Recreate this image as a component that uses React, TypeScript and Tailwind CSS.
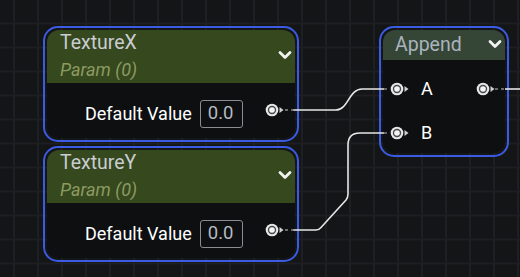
const font = { fontFamily: 'Roboto, "Noto Sans", sans-serif' }

function Chevron() {
  return (
    <svg width="14" height="10" viewBox="0 0 14 10" className="shrink-0">
      <polyline points="2,2.5 7,7.5 12,2.5" fill="none" stroke="#f2f2f2" strokeWidth="2.8" strokeLinecap="round" strokeLinejoin="round" />
    </svg>
  )
}

function ParamNode({ name, top }: { name: string; top: string }) {
  return (
    <div className={`absolute left-[43px] ${top} w-[256px] h-[116px] rounded-[15px] border-2 border-[#3b5be3] p-[2px]`}>
      <div className="h-full rounded-[12px] bg-[#0e0f11] overflow-hidden flex flex-col">
        <div className="h-[53px] bg-[#36481d] flex items-center pl-[13px] pr-[3px]">
          <div className="flex-1 flex flex-col self-start pt-[1px]">
            <span className="text-[19.5px] leading-[24px] text-[#c9cdd3]">{name}</span>
            <span className="mt-[4px] text-[18px] leading-[22px] italic text-[#8d9a62]">Param (0)</span>
          </div>
          <div className="mb-[3px]">
            <Chevron />
          </div>
        </div>
        <div className="flex items-center gap-[8px] pt-[17px] pl-[38px]">
          <span className="text-[18px] leading-[28px] text-white">Default Value</span>
          <div className="h-[28px] w-[43px] border border-[#8b8d91] rounded-[3px] flex items-center pl-[7px] text-[18.5px] text-[#b6bac2]">
            0.0
          </div>
        </div>
      </div>
    </div>
  )
}

function AppendNode() {
  return (
    <div className="absolute left-[379px] top-[26px] w-[130px] h-[131px] rounded-[15px] border-2 border-[#3b5be3] p-[2px]">
      <div className="h-full rounded-[12px] bg-[#0e0f11] overflow-hidden flex flex-col">
        <div className="h-[30px] bg-[#354536] flex items-center justify-between pl-[12px] pr-[3px]">
          <span className="text-[19.5px] leading-[24px] text-[#aab4bd]">Append</span>
          <div className="mb-[2px]">
            <Chevron />
          </div>
        </div>
        <div className="flex flex-col gap-[16px] pt-[15px] pl-[38px] text-[18px] text-white">
          <span className="h-[28px] leading-[28px]">A</span>
          <span className="h-[28px] leading-[28px]">B</span>
        </div>
      </div>
    </div>
  )
}

function Pin({ x, y }: { x: number; y: number }) {
  return (
    <g>
      <circle cx={x} cy={y} r="6.3" fill="#e8e8e8" />
      <circle cx={x} cy={y} r="4.2" fill="#4a4a4a" />
      <circle cx={x} cy={y} r="2.8" fill="#f4f4f4" />
      <polygon points={`${x + 7.5},${y - 3} ${x + 11.5},${y} ${x + 7.5},${y + 3}`} fill="#d0d0d0" />
    </g>
  )
}

export default function App() {
  const vlines = Array.from({ length: 22 }, (_, i) => 14 + i * 24)
  const hlines = Array.from({ length: 12 }, (_, i) => 23.5 + i * 24)
  return (
    <div className="relative w-[520px] h-[277px] overflow-hidden bg-[#141517]" style={font}>
      <svg className="absolute inset-0" width="520" height="277">
        {vlines.map((x) => (
          <rect key={`v${x}`} x={x - 1} y="0" width="2" height="277" fill="#1e1f22" />
        ))}
        {hlines.map((y) => (
          <rect key={`h${y}`} x="0" y={y - 1} width="520" height="2" fill="#1e1f22" />
        ))}
      </svg>

      <ParamNode name="TextureX" top="top-[26px]" />
      <ParamNode name="TextureY" top="top-[146px]" />
      <AppendNode />

      <svg className="absolute inset-0 pointer-events-none" width="520" height="277">
        <g fill="none" stroke="#e6e6e6" strokeWidth="1.6">
          <path d="M293 110 L336 110 C348 110 349 89 362 89 L384 89" />
          <path d="M293 230 L316 230 Q319 230 321 227.5 L346 200 Q348 197.5 348 194 L348 145 Q348 133 360 133 L384 133" />
          <path d="M505 89 L520 89" />
        </g>
        <g stroke="#8a8a8a" strokeWidth="1.4" strokeDasharray="3 3">
          <line x1="285" y1="110" x2="294" y2="110" />
          <line x1="285" y1="230" x2="294" y2="230" />
          <line x1="384" y1="89" x2="390" y2="89" />
          <line x1="384" y1="133" x2="390" y2="133" />
          <line x1="495" y1="89" x2="506" y2="89" />
        </g>
        <Pin x={272} y={110} />
        <Pin x={272} y={230} />
        <Pin x={397} y={89} />
        <Pin x={397} y={133} />
        <Pin x={483} y={89} />
      </svg>
    </div>
  )
}
